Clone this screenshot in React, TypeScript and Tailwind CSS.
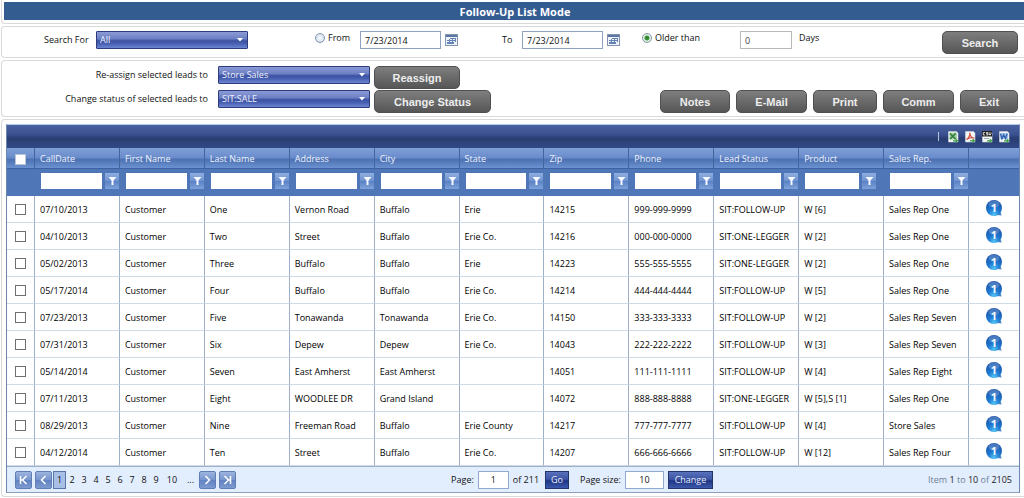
import React from "react";

const columns = [
  "CallDate",
  "First Name",
  "Last Name",
  "Address",
  "City",
  "State",
  "Zip",
  "Phone",
  "Lead Status",
  "Product",
  "Sales Rep.",
];

const leads = [
  ["07/10/2013", "Customer", "One", "Vernon Road", "Buffalo", "Erie", "14215", "999-999-9999", "SIT:FOLLOW-UP", "W [6]", "Sales Rep One"],
  ["04/10/2013", "Customer", "Two", "Street", "Buffalo", "Erie Co.", "14216", "000-000-0000", "SIT:ONE-LEGGER", "W [2]", "Sales Rep One"],
  ["05/02/2013", "Customer", "Three", "Buffalo", "Buffalo", "Erie", "14223", "555-555-5555", "SIT:ONE-LEGGER", "W [2]", "Sales Rep One"],
  ["05/17/2014", "Customer", "Four", "Buffalo", "Buffalo", "Erie Co.", "14214", "444-444-4444", "SIT:FOLLOW-UP", "W [5]", "Sales Rep One"],
  ["07/23/2013", "Customer", "Five", "Tonawanda", "Tonawanda", "Erie Co.", "14150", "333-333-3333", "SIT:FOLLOW-UP", "W [2]", "Sales Rep Seven"],
  ["07/31/2013", "Customer", "Six", "Depew", "Depew", "Erie Co.", "14043", "222-222-2222", "SIT:FOLLOW-UP", "W [3]", "Sales Rep Seven"],
  ["05/14/2014", "Customer", "Seven", "East Amherst", "East Amherst", "", "14051", "111-111-1111", "SIT:FOLLOW-UP", "W [4]", "Sales Rep Eight"],
  ["07/11/2013", "Customer", "Eight", "WOODLEE DR", "Grand Island", "", "14072", "888-888-8888", "SIT:ONE-LEGGER", "W [5],S [1]", "Sales Rep One"],
  ["08/29/2013", "Customer", "Nine", "Freeman Road", "Buffalo", "Erie County", "14217", "777-777-7777", "SIT:FOLLOW-UP", "W [4]", "Store Sales"],
  ["04/12/2014", "Customer", "Ten", "Street", "Buffalo", "Erie Co.", "14207", "666-666-6666", "SIT:FOLLOW-UP", "W [12]", "Sales Rep Four"],
];

const panel = "ml-px border-y border-l border-[#d9d9d9] rounded-l-[4px] bg-white";

function GlossySelect({ id, value }: { id: string; value: string }) {
  return (
    <div className="relative h-[18px] w-[152px] shrink-0">
      <select
        id={id}
        defaultValue={value}
        className="h-full w-full appearance-none rounded-[1px] border border-[#2c3c7c] bg-[linear-gradient(to_bottom,#8b9bd6_0%,#6c7fc4_42%,#3c52a2_55%,#4a62b4_75%,#6c86d2_100%)] pl-[3px] text-[9px] leading-4 text-[#eceffa] outline-none"
      >
        <option>{value}</option>
      </select>
      <svg className="pointer-events-none absolute right-[5px] top-[7px] h-[4px] w-[6px]" viewBox="0 0 6 4">
        <path d="M0 0h6L3 3.6z" fill="#fff" />
      </svg>
    </div>
  );
}

function GrayButton({ children, width }: { children: React.ReactNode; width: string }) {
  return (
    <button
      type="button"
      className={`h-[23px] shrink-0 rounded-[5px] border border-[#505050] bg-[linear-gradient(to_bottom,#7e7e7e,#565656)] text-center font-['Liberation_Sans',sans-serif] text-[11px] font-bold leading-[22px] text-[#ededed] ${width}`}
    >
      {children}
    </button>
  );
}

function CalendarButton({ label }: { label: string }) {
  return (
    <button type="button" aria-label={label} className="h-[12px] w-[13px] shrink-0">
      <svg viewBox="0 0 13 12" className="block h-full w-full" shapeRendering="crispEdges">
        <rect width="13" height="12" fill="#8494ae" />
        <rect x="1" y="1" width="11" height="2" fill="#5b76a4" />
        <rect x="1" y="3" width="11" height="8" fill="#eef4fc" />
        <path
          d="M5 4h2v1H5zM8 4h2v1H8zM2 6h2v1H2zM5 6h2v1H5zM8 6h3v1H8zM2 8h2v2H2zM5 8h2v2H5zM8 8h1v2H8zM7 4h1v6H7zM10 4h1v4h-1zM4 5h1v5H4z"
          fill="#6482b4"
        />
      </svg>
    </button>
  );
}

function RadioOption({ id, label, checked }: { id: string; label: string; checked?: boolean }) {
  return (
    <div className="flex h-[14px] shrink-0 items-center gap-[3px]">
      <input
        id={id}
        type="radio"
        name="range"
        defaultChecked={checked}
        className="h-[10px] w-[10px] appearance-none rounded-full border border-[#8494ae] bg-[radial-gradient(circle,#f7faff,#cbd7ea)] checked:border-[#7f96a4] checked:bg-[radial-gradient(circle,#2c7a2c_0,#3c9440_2px,#e6f2e6_3px)]"
      />
      <label htmlFor={id}>{label}</label>
    </div>
  );
}

function FilterIcon() {
  return (
    <svg viewBox="0 0 14 16" className="block h-full w-full">
      <path d="M3.5 4h8L8.5 7.4V12h-2V7.4z" fill="#f6f9ff" />
    </svg>
  );
}

function ExportButton({ kind }: { kind: "excel" | "pdf" | "csv" | "word" }) {
  return (
    <button type="button" aria-label={`Export to ${kind}`} className="h-[12px] w-[11px]">
      <svg viewBox="0 0 11 12" className="block h-full w-full">
        <path d="M.5.5h8l1.5 1.5v9H.5z" fill="#f4f7f4" stroke="#c9d3dd" strokeWidth=".6" />
        {kind === "excel" && (
          <>
            <path d="M1.5 1.5h7.5v7h-7.5z" fill="#a8cfa9" />
            <path d="M2 2.5l5.5 5.5M7.5 2.5L2 8" stroke="#2f7f3a" strokeWidth="1.7" />
          </>
        )}
        {kind === "pdf" && (
          <path d="M1.5 8.5C4 7 5 4 4.8 1.8 5 5 7 7 9.4 7.2 6 6.2 3.5 7 1.5 8.5z" fill="none" stroke="#d34b40" strokeWidth="1.2" />
        )}
        {kind === "csv" && (
          <>
            <path d="M0 0h10v5.5H0z" fill="#222" />
            <path d="M3 1.5H1.3v2.5H3M6 1.5H4.4v1.2H6V4H4.3M7.2 1.3v1.6L8 4.2l.9-1.3V1.3" fill="none" stroke="#fff" strokeWidth=".8" />
            <path d="M2 7.5h5" stroke="#9aa9b8" />
          </>
        )}
        {kind === "word" && (
          <>
            <path d="M1 2h8v6H1z" fill="#a9c5ec" />
            <path d="M1.6 2.7l1.4 5 1.7-4 1.7 4 1.7-5" fill="none" stroke="#2b5fb0" strokeWidth="1.3" />
          </>
        )}
        <path d="M5 9.2h2.6V7.6l3 2.2-3 2v-1.4H5z" fill="#3f9f45" />
      </svg>
    </button>
  );
}

function InfoBall() {
  return (
    <svg viewBox="0 0 18 18" className="block h-[18px] w-[18px]">
      <defs>
        <radialGradient id="ball" cx="50%" cy="90%" r="90%">
          <stop offset="0" stopColor="#52c4f6" />
          <stop offset=".4" stopColor="#1e7ad2" />
          <stop offset="1" stopColor="#1a4fa6" />
        </radialGradient>
      </defs>
      <path d="M12 16l4.6.6-1-3.6z" fill="#4a86c6" />
      <circle cx="9" cy="9" r="8" fill="url(#ball)" />
      <ellipse cx="9" cy="5" rx="5.5" ry="3.4" fill="#fff" opacity=".2" />
      <text x="9" y="13" textAnchor="middle" fontSize="11" fontWeight="700" fill="#f2faff" fontFamily="Open Sans, sans-serif">
        1
      </text>
    </svg>
  );
}

function PagerArrow({ label, d }: { label: string; d: string }) {
  return (
    <button
      type="button"
      aria-label={label}
      className="h-[18px] w-[17px] shrink-0 rounded-[2px] border border-[#5f7eb8] bg-[linear-gradient(to_bottom,#9db4de,#7694cd_50%,#6283c2_52%,#7d9ad0)]"
    >
      <svg viewBox="0 0 15 16" className="block h-full w-full">
        <path d={d} fill="none" stroke="#fff" strokeWidth="1.5" />
      </svg>
    </button>
  );
}

const box = "appearance-none h-[11px] w-[11px] border bg-white checked:bg-[#3a5ea8] block mx-auto";
const dateBox =
  "h-[18px] w-[81px] shrink-0 border border-[#8fa3bf] bg-white pl-[4px] text-[9px] leading-4 text-[#111] outline-none";
const pagerBlue =
  "h-[18px] shrink-0 border border-[#23356f] bg-[linear-gradient(to_bottom,#5a72bc,#3c55a4_45%,#1f3684_55%,#3c58ac)] text-[9px] leading-4 text-[#e8edfb]";

export default function App() {
  return (
    <main className="min-w-[1000px] overflow-hidden bg-white font-['Open_Sans','Noto_Sans',sans-serif] text-[9px] leading-[14px] text-[#111]">
      <header className="ml-px rounded-bl-[4px] border-b border-l border-[#d9d9d9] pb-[3px] pl-[2px] pt-[2px]">
        <h1 className="h-[18px] bg-[#335c91] pl-[2px] text-center text-[11px] font-bold leading-[20px] text-white">
          Follow-Up List Mode
        </h1>
      </header>

      <form className={`${panel} mt-[2px] flex h-[32px] items-start pl-[42px] pr-[6px] pt-[4px]`}>
        <label htmlFor="search-for" className="w-[52px] shrink-0 pt-[2px]">
          Search For
        </label>
        <GlossySelect id="search-for" value="All" />
        <div className="ml-[67px] w-[45px] shrink-0">
          <RadioOption id="from" label="From" />
        </div>
        <input aria-label="From date" defaultValue="7/23/2014" className={dateBox} />
        <div className="ml-[4px] pt-[3px]">
          <CalendarButton label="Pick from date" />
        </div>
        <label htmlFor="to-date" className="ml-[44px] w-[20px] shrink-0 pt-[2px]">
          To
        </label>
        <input id="to-date" defaultValue="7/23/2014" className={dateBox} />
        <div className="ml-[4px] pt-[3px]">
          <CalendarButton label="Pick to date" />
        </div>
        <div className="ml-[22px] w-[98px] shrink-0">
          <RadioOption id="older" label="Older than" checked />
        </div>
        <input
          id="days"
          defaultValue="0"
          className="h-[18px] w-[52px] shrink-0 border border-[#b9b9b9] bg-white pl-[4px] text-[9px] leading-4 text-[#444] outline-none"
        />
        <label htmlFor="days" className="ml-[7px]">
          Days
        </label>
        <div className="ml-auto">
          <GrayButton width="w-[76px]">Search</GrayButton>
        </div>
      </form>

      <section className={`${panel} mt-[2px] flex h-[57px] items-start justify-between pl-[2px] pr-[6px] pt-[5px]`}>
        <div className="flex flex-col gap-[1px]">
          <div className="flex h-[23px] gap-[4px]">
            <label htmlFor="reassign" className="mr-[6px] w-[204px] pt-[2px] text-right">
              Re-assign selected leads to
            </label>
            <GlossySelect id="reassign" value="Store Sales" />
            <GrayButton width="w-[86px]">Reassign</GrayButton>
          </div>
          <div className="flex h-[23px] gap-[4px]">
            <label htmlFor="status" className="mr-[6px] w-[204px] pt-[2px] text-right">
              Change status of selected leads to
            </label>
            <GlossySelect id="status" value="SIT:SALE" />
            <GrayButton width="w-[117px]">Change Status</GrayButton>
          </div>
        </div>
        <div className="flex gap-[6px] pt-[24px]">
          <GrayButton width="w-[70px]">Notes</GrayButton>
          <GrayButton width="w-[71px]">E-Mail</GrayButton>
          <GrayButton width="w-[64px]">Print</GrayButton>
          <GrayButton width="w-[71px]">Comm</GrayButton>
          <GrayButton width="w-[58px]">Exit</GrayButton>
        </div>
      </section>

      <section className={`${panel} mt-[2px] pb-[3px] pl-[4px] pr-[4px] pt-[4px]`}>
        <div className="border border-t-[#b5cdea] border-x-[#6c87ae] border-b-[#8ba0bd]">
          <div className="flex h-[23px] items-center justify-end gap-[6px] bg-[linear-gradient(to_bottom,#4a62a0_0%,#3b5190_40%,#293d72_60%,#304a88_100%)] pr-[9px]">
            <span className="mr-[3px] h-[9px] w-px bg-[#b7c3df]" />
            <ExportButton kind="excel" />
            <ExportButton kind="pdf" />
            <ExportButton kind="csv" />
            <ExportButton kind="word" />
          </div>
          <table className="w-full table-fixed border-separate border-spacing-0">
            <colgroup>
              <col className="w-[28px]" />
              {columns.map((c) => (
                <col key={c} />
              ))}
              <col className="w-[50px]" />
            </colgroup>
            <thead>
              <tr className="h-[21px] bg-[linear-gradient(to_bottom,#7f9fd8_0%,#6a8ccb_45%,#4d71b2_55%,#6f96d4_100%)] text-left text-[#eef3fd]">
                <th className="border-b border-r border-b-[#3d62a4] border-r-[#41659f] p-0 pt-[2px]">
                  <input type="checkbox" aria-label="Select all" className={`${box} border-[#b9c4d6]`} />
                </th>
                {columns.map((c) => (
                  <th key={c} className="border-b border-r border-b-[#3d62a4] border-r-[#41659f] p-0 pl-[5px] pt-[2px] font-normal">
                    {c}
                  </th>
                ))}
                <th className="border-b border-[#3d62a4] p-0" />
              </tr>
              <tr className="h-[27px] bg-[#4f77b7]">
                <td className="p-0" />
                {columns.map((c) => (
                  <td key={c} className="p-0 pb-[3px] pl-[6px]">
                    <div className={c === "Product" ? "flex gap-[3px] pr-[7px]" : "flex gap-[3px]"}>
                      <input
                        aria-label={`Filter ${c}`}
                        className="h-[16px] w-0 min-w-0 flex-1 bg-white px-1 outline-none"
                      />
                      <button
                        type="button"
                        aria-label={`${c} filter options`}
                        className="mr-px h-[16px] w-[14px] shrink-0 bg-[linear-gradient(to_bottom,#8faee0,#6f93d0_50%,#5b82c4_52%,#7ea2da)]"
                      >
                        <FilterIcon />
                      </button>
                    </div>
                  </td>
                ))}
                <td className="p-0" />
              </tr>
            </thead>
            <tbody>
              {leads.map((row, r) => (
                <tr key={r} className="h-[27px] bg-white">
                  <td className="border-b border-r border-b-[#cfdae6] border-r-[#9db0c8] p-0">
                    <input type="checkbox" aria-label={`Select lead ${row[2]}`} className={`${box} border-[#6f6f6f]`} />
                  </td>
                  {row.map((cell, i) => (
                    <td
                      key={i}
                      className="whitespace-nowrap border-b border-r border-b-[#cfdae6] border-r-[#9db0c8] p-0 pl-[5px] pt-px text-black"
                    >
                      {cell}
                    </td>
                  ))}
                  <td className="border-b border-[#cfdae6] p-0">
                    <button type="button" aria-label="Lead details" className="mx-auto mb-[2px] block">
                      <InfoBall />
                    </button>
                  </td>
                </tr>
              ))}
            </tbody>
          </table>
          <footer className="flex h-[26px] items-center justify-between border-t border-[#9db0c8] bg-[#e2edfd] pl-[8px] pr-[7px]">
            <nav aria-label="Pages" className="flex items-center">
              <PagerArrow label="First page" d="M4.5 4v8M10.5 4l-4 4 4 4M5 8h2" />
              <span className="w-[3px]" />
              <PagerArrow label="Previous page" d="M9.5 4l-4 4 4 4" />
              <a href="#1" className="ml-px h-[18px] w-[13px] border border-[#5b76a8] bg-[#a9c0e6] text-center leading-4">
                1
              </a>
              {[2, 3, 4, 5, 6, 7, 8, 9].map((n) => (
                <a key={n} href={`#${n}`} className="w-[12px] text-center">
                  {n}
                </a>
              ))}
              <a href="#10" className="w-[20px] text-center">
                10
              </a>
              <a href="#11" className="w-[17px] text-center">
                ...
              </a>
              <PagerArrow label="Next page" d="M5.5 4l4 4-4 4" />
              <span className="w-[3px]" />
              <PagerArrow label="Last page" d="M10.5 4v8M4.5 4l4 4-4 4M8 8h2" />
            </nav>
            <div className="flex items-center">
              <label htmlFor="page">Page:</label>
              <input
                id="page"
                defaultValue="1"
                className="mx-[4px] h-[18px] w-[31px] border border-[#8fa9cf] bg-white text-center outline-none"
              />
              <span>of 211</span>
              <button type="button" className={`${pagerBlue} ml-[6px] w-[24px]`}>
                Go
              </button>
              <label htmlFor="page-size" className="ml-[11px]">
                Page size:
              </label>
              <input
                id="page-size"
                defaultValue="10"
                className="mx-[4px] h-[18px] w-[39px] border border-[#8fa9cf] bg-white text-center outline-none"
              />
              <button type="button" className={`${pagerBlue} w-[45px]`}>
                Change
              </button>
            </div>
            <p className="text-[#6d7f99]">
              Item <b className="font-normal text-[#222]">1</b> to <b className="font-normal text-[#222]">10</b> of{" "}
              <b className="font-normal text-[#222]">2105</b>
            </p>
          </footer>
        </div>
      </section>
    </main>
  );
}
